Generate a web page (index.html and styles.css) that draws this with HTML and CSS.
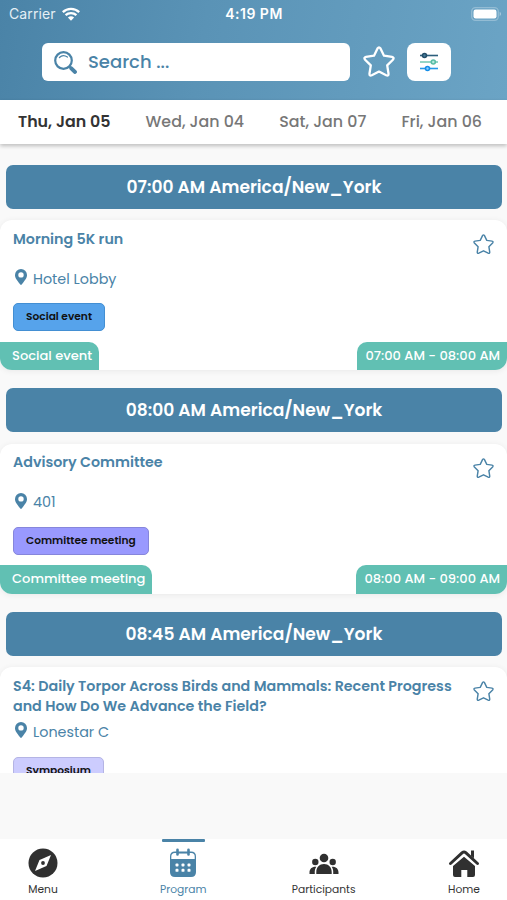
FILE: index.html
```html
<!DOCTYPE html>
<html lang="en">
<head>
<meta charset="utf-8">
<title>Program</title>
<link rel="stylesheet" href="styles.css">
</head>
<body>
<svg class="defs" aria-hidden="true">
  <symbol id="star" viewBox="0 0 32 32"><path d="M14.500 2.500Q16 .2 17.500 2.500L21 9.700L29 10.900Q31.600 11.500 29.900 13.700L24.200 19.400L25.500 27.500Q25.700 30.300 23.200 29.300L16 25.600L8.800 29.300Q6.300 30.300 6.500 27.500L7.800 19.400L2.100 13.700Q.4 11.500 3 10.900L11 9.700Z" fill="none" stroke="currentColor" stroke-linejoin="round"/></symbol>
  <symbol id="pin" viewBox="0 0 12 16"><path fill="currentColor" fill-rule="evenodd" d="M6 0a6 6 0 0 0-6 6c0 2.500 1 4 5.300 9.600q.7.800 1.400 0C11 10 12 8.500 12 6a6 6 0 0 0-6-6Zm0 3.200a2.700 2.700 0 1 1 0 5.400 2.700 2.700 0 0 1 0-5.400Z"/></symbol>
</svg>
<div class="app">
  <header class="header">
    <div class="status">
      <div class="carrier"><span>Carrier</span>
        <svg width="18" height="14" viewBox="0 0 18 14" fill="none" stroke="#fff" stroke-width="2.300"><path d="M.8 5.200a11.800 11.800 0 0 1 16.400 0M3.600 8.200a7.800 7.800 0 0 1 10.800 0"/><path d="M9 13.700 5.900 10.500q3.100-2.400 6.200 0Z" fill="#fff" stroke="none"/></svg>
      </div>
      <div class="clock">4:19 PM</div>
      <svg class="battery" width="31" height="14" viewBox="0 0 31 14"><rect x=".7" y=".7" width="26.600" height="12.600" rx="3.800" fill="none" stroke="#93bcd4" stroke-width="1.300"/><rect x="2.500" y="2.500" width="23" height="9" rx="2.200" fill="#fff"/><path d="M28.700 4.800q2.600 2.200 0 4.400Z" fill="#a9cbdf"/></svg>
    </div>
    <div class="tools">
      <div class="search">
        <svg width="23" height="23" viewBox="0 0 23 23" fill="none" stroke="#4a83a7" stroke-linecap="round"><circle cx="9.500" cy="9.500" r="8.300" stroke-width="2.200"/><path d="M5.400 6.500Q9 2.800 13.400 6.100" stroke-width="1.200"/><path d="m15.500 15.500 1.800 1.800" stroke-width="2"/><path d="m17.300 17.300 3.600 3.600" stroke-width="4"/></svg>
        <span>Search ...</span>
      </div>
      <svg class="fav-filter"><use href="#star"/></svg>
      <div class="filter">
        <svg width="18" height="20" viewBox="0 0 18 20" stroke-width="1.600"><path d="M0 3.500h18" stroke="#2d5f7c"/><circle cx="4.500" cy="3.500" r="2" fill="#477f9e" stroke="#234d68"/><path d="M0 10h18" stroke="#79cbb8"/><circle cx="13.300" cy="10" r="2" fill="#b9e8dc" stroke="#58bda5"/><path d="M0 16.500h18" stroke="#2598e8"/><circle cx="7.500" cy="16.500" r="2" fill="#8bd0ff" stroke="#158ee8"/></svg>
      </div>
    </div>
  </header>
  <nav class="days">
    <span class="day active">Thu, Jan 05</span><span class="day">Wed, Jan 04</span><span class="day">Sat, Jan 07</span><span class="day">Fri, Jan 06</span>
  </nav>
  <main class="list">
    <h2 class="slot">07:00 AM America/New_York</h2>
    <article class="card">
      <div class="content">
        <h3>Morning 5K run</h3>
        <p class="place"><svg><use href="#pin"/></svg><span>Hotel Lobby</span></p>
        <span class="chip social">Social event</span>
      </div>
      <svg class="fav"><use href="#star"/></svg>
      <footer><span class="type">Social event</span><span class="time">07:00 AM - 08:00 AM</span></footer>
    </article>
    <h2 class="slot">08:00 AM America/New_York</h2>
    <article class="card">
      <div class="content">
        <h3>Advisory Committee</h3>
        <p class="place"><svg><use href="#pin"/></svg><span>401</span></p>
        <span class="chip committee">Committee meeting</span>
      </div>
      <svg class="fav"><use href="#star"/></svg>
      <footer><span class="type">Committee meeting</span><span class="time">08:00 AM - 09:00 AM</span></footer>
    </article>
    <h2 class="slot">08:45 AM America/New_York</h2>
    <article class="card">
      <div class="content">
        <h3>S4: Daily Torpor Across Birds and Mammals: Recent Progress<br>and How Do We Advance the Field?</h3>
        <p class="place"><svg><use href="#pin"/></svg><span>Lonestar C</span></p>
        <span class="chip symposium">Symposium</span>
      </div>
      <svg class="fav"><use href="#star"/></svg>
    </article>
  </main>
  <nav class="bottom">
    <a class="item"><svg width="30" height="30" viewBox="0 0 30 30"><circle cx="15" cy="15" r="14.500" fill="#303030"/><path d="m23 7-4.500 11-11.500 5L11.500 12Z" fill="#fff"/><circle cx="15" cy="15" r="1.900" fill="#303030"/></svg><span>Menu</span></a>
    <a class="item current"><svg width="30" height="30" viewBox="0 0 30 30"><path d="M7 3.500h16q5 0 5 5V24q0 5-5 5H7q-5 0-5-5V8.500q0-5 5-5Z" fill="#4a83a7"/><path d="M3.300 11V8.500q0-3.500 3.500-3.500h16.400q3.500 0 3.500 3.500V11Z" fill="#fff"/><path d="M9 4.800h12" stroke="#4a83a7" stroke-width="1.500"/><path d="M9.500 1.800v4.700m11-4.700v4.700" stroke="#4a83a7" stroke-width="2.600" stroke-linecap="round"/><g fill="#fff"><rect x="7.500" y="15.500" width="3" height="3" rx=".9"/><rect x="13.500" y="15.500" width="3" height="3" rx=".9"/><rect x="19.500" y="15.500" width="3" height="3" rx=".9"/><rect x="7.500" y="20.800" width="3" height="3" rx=".9"/><rect x="13.500" y="20.800" width="3" height="3" rx=".9"/><rect x="19.500" y="20.800" width="3" height="3" rx=".9"/></g></svg><span>Program</span></a>
    <a class="item"><svg width="30" height="30" viewBox="0 0 30 30" fill="#303030"><circle cx="15" cy="10" r="4.300"/><circle cx="6.300" cy="14" r="3.200"/><circle cx="23.700" cy="14" r="3.200"/><path d="M7.300 26v-2c0-5 3.200-8 7.700-8s7.700 3 7.700 8v2ZM.5 26v-1.500c0-3.600 2.400-6 6.800-5.700-1.300 1.800-1.700 4-1.500 7.200Zm29 0v-1.500c0-3.600-2.400-6-6.800-5.700 1.300 1.800 1.700 4 1.500 7.200Z"/></svg><span>Participants</span></a>
    <a class="item"><svg width="32" height="30" viewBox="0 0 32 30"><path d="M16 8.800 27 18v9q0 2-2 2h-5.700v-7h-6v7H7q-2 0-2-2v-9ZM23 2.500h3v7.800l-3-2.600Z" fill="#303030"/><path d="M2.500 15.500 14.300 4.700q1.700-1.500 3.400 0L29.500 15.500" fill="none" stroke="#303030" stroke-width="3" stroke-linecap="round"/><path d="M4.500 17.200 16 7.200l11.500 10" fill="none" stroke="#fff" stroke-width=".9"/></svg><span>Home</span></a>
  </nav>
</div>
</body>
</html>
```
FILE: styles.css
```css
* { box-sizing: border-box; }
body { margin: 0; font-family: Poppins, Inter, "Noto Sans", sans-serif; background: #f9f9f9; }
h2, h3, p { margin: 0; }
.defs { position: absolute; width: 0; height: 0; }
.app { width: 507px; height: 900px; display: flex; flex-direction: column; overflow: hidden; }
.header { flex: none; height: 100px; background: linear-gradient(100deg, #4a83a7 0%, #5a93b6 40%, #6ba4c5 100%); color: #fff; }
.status { display: grid; grid-template-columns: 1fr auto 1fr; align-items: center; height: 27px; padding: 0 8px 0 9px; font-family: Inter, sans-serif; }
.carrier { display: flex; align-items: center; gap: 6px; font-size: 14px; letter-spacing: .1px; color: #e5eff5; }
.clock { font-size: 14px; font-weight: 600; letter-spacing: .5px; }
.battery { justify-self: end; margin-right: -3px; }
.tools { display: flex; align-items: center; padding: 16px 0 0 42px; }
.search { width: 308px; height: 38px; border-radius: 6px; background: #fff; color: #4a83a7; display: flex; align-items: center; gap: 11px; padding-left: 12px; font-size: 18px; font-weight: 500; }
.search span { margin-top: -2px; }
.fav-filter { width: 32px; height: 32px; margin: 0 12px 0 13px; stroke-width: 2.3; }
.filter { width: 44px; height: 38px; border-radius: 8px; background: #fff; display: flex; align-items: center; justify-content: center; }
.days { flex: none; position: relative; height: 44px; display: flex; justify-content: space-between; align-items: center; padding: 0 25px 2px 18px; background: #fff; box-shadow: 0 2px 4px rgba(0,0,0,.24); color: #777; font-size: 15.850px; font-weight: 500; }
.day { white-space: nowrap; }
.active { color: #333; font-weight: 600; }
.list { flex: none; height: 629px; padding-top: 20.500px; overflow: hidden; }
.slot { height: 44px; margin: 0 5px 11.500px 6px; border-radius: 7px; background: #4a83a7; color: #fff; font-size: 17.100px; line-height: 44px; font-weight: 600; text-align: center; }
.card { position: relative; height: 150px; margin-bottom: 18px; border-radius: 12px; background: #fff; box-shadow: 0 1px 6px rgba(0,0,0,.07); color: #4a83a7; }
.content { padding: 8.500px 13px 0; }
h3 { min-height: 34px; font-size: 14.280px; line-height: 20px; font-weight: 600; white-space: nowrap; }
.place { height: 24px; margin-top: 4px; padding-left: 2px; display: flex; align-items: center; gap: 6px; font-size: 14.350px; }
.place svg { width: 12px; height: 16px; margin-top: -3px; }
.place span { padding-top: 1px; }
.chip { display: inline-block; height: 28px; margin-top: 12.500px; padding: 0 12px; border: 1px solid; border-radius: 5px; color: #111; font-size: 10.650px; line-height: 26px; font-weight: 600; }
.social { background: #56a3eb; border-color: #438fd3; }
.committee { background: #9999fe; border-color: #8686db; }
.symposium { margin-top: 13px; background: #ccccfe; border-color: #b4b4e4; }
.fav { position: absolute; top: 14px; right: 13px; width: 21px; height: 21px; stroke-width: 2.2; }
footer { position: absolute; left: 0; right: 0; bottom: 0; display: flex; justify-content: space-between; height: 28.500px; color: #fff; font-size: 13.050px; line-height: 28.500px; font-weight: 500; }
.type, .time { background: #61c0b3; white-space: nowrap; }
.type { padding: 0 7px 0 12px; border-radius: 0 10px 0 12px; }
.time { padding: 0 7px 0 8px; border-radius: 10px 0 12px 0; }
.bottom { margin-top: auto; height: 61px; display: flex; justify-content: space-between; background: #fff; }
.item { width: 86px; height: 61px; display: flex; flex-direction: column; align-items: center; padding-top: 9px; color: #333; font-size: 10.700px; line-height: 16px; }
.item span { margin-top: 4px; }
.current { color: #4a83a7; position: relative; }
.current::before { content: ""; position: absolute; top: 0; width: 43px; height: 2.500px; border-radius: 1px; background: #4a83a7; }
```
